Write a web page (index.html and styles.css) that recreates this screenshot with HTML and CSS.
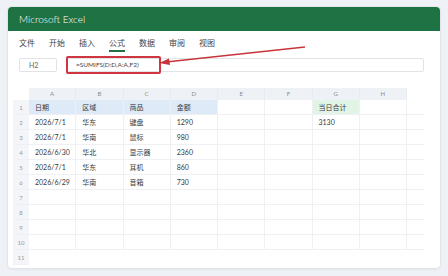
FILE: index.html
```html
<!DOCTYPE html>
<html lang="zh-CN">
<head>
<meta charset="utf-8">
<title>Microsoft Excel</title>
<link rel="stylesheet" href="styles.css">
</head>
<body>
<div class="window">
  <div class="titlebar">Microsoft Excel</div>
  <div class="menu">
    <span class="item">文件</span>
    <span class="item">开始</span>
    <span class="item">插入</span>
    <span class="item active">公式</span>
    <span class="item">数据</span>
    <span class="item">审阅</span>
    <span class="item">视图</span>
  </div>
  <div class="formula-row">
    <div class="namebox">H2</div>
    <div class="fx">
      <span class="fx-text">=SUMIFS(D:D,A:A,F2)</span>
      <div class="highlight"></div>
    </div>
  </div>
  <div class="sheet">
    <div class="corner"></div>
    <div class="ch">A</div><div class="ch">B</div><div class="ch">C</div><div class="ch">D</div>
    <div class="ch">E</div><div class="ch">F</div><div class="ch">G</div><div class="ch">H</div>
    <div class="fill-h"></div>

    <div class="rh">1</div>
    <div class="c blue">日期</div><div class="c blue">区域</div><div class="c blue">商品</div><div class="c blue">金额</div>
    <div class="c"></div><div class="c"></div><div class="c green">当日合计</div><div class="c"></div><div class="f"></div>

    <div class="rh">2</div>
    <div class="c">2026/7/1</div><div class="c">华东</div><div class="c">键盘</div><div class="c">1290</div>
    <div class="c"></div><div class="c"></div><div class="c">3130</div><div class="c"></div><div class="f"></div>

    <div class="rh">3</div>
    <div class="c">2026/7/1</div><div class="c">华南</div><div class="c">鼠标</div><div class="c">980</div>
    <div class="c"></div><div class="c"></div><div class="c"></div><div class="c"></div><div class="f"></div>

    <div class="rh">4</div>
    <div class="c">2026/6/30</div><div class="c">华北</div><div class="c">显示器</div><div class="c">2360</div>
    <div class="c"></div><div class="c"></div><div class="c"></div><div class="c"></div><div class="f"></div>

    <div class="rh">5</div>
    <div class="c">2026/7/1</div><div class="c">华东</div><div class="c">耳机</div><div class="c">860</div>
    <div class="c"></div><div class="c"></div><div class="c"></div><div class="c"></div><div class="f"></div>

    <div class="rh">6</div>
    <div class="c">2026/6/29</div><div class="c">华南</div><div class="c">音箱</div><div class="c">730</div>
    <div class="c"></div><div class="c"></div><div class="c"></div><div class="c"></div><div class="f"></div>

    <div class="rh">7</div>
    <div class="c"></div><div class="c"></div><div class="c"></div><div class="c"></div>
    <div class="c"></div><div class="c"></div><div class="c"></div><div class="c"></div><div class="f"></div>

    <div class="rh">8</div>
    <div class="c"></div><div class="c"></div><div class="c"></div><div class="c"></div>
    <div class="c"></div><div class="c"></div><div class="c"></div><div class="c"></div><div class="f"></div>

    <div class="rh">9</div>
    <div class="c"></div><div class="c"></div><div class="c"></div><div class="c"></div>
    <div class="c"></div><div class="c"></div><div class="c"></div><div class="c"></div><div class="f"></div>

    <div class="rh">10</div>
    <div class="c"></div><div class="c"></div><div class="c"></div><div class="c"></div>
    <div class="c"></div><div class="c"></div><div class="c"></div><div class="c"></div><div class="f"></div>

    <div class="rh">11</div>
    <div class="last"></div>
  </div>
  <svg class="arrow" width="448" height="80" viewBox="0 0 448 80">
    <line x1="305" y1="47" x2="166" y2="62" stroke="#c9343c" stroke-width="1.4"/>
    <polygon points="159,63 169,58.5 170,65" fill="#c9343c"/>
  </svg>
</div>
</body>
</html>
```
FILE: styles.css
```css
* { box-sizing: border-box; }
html, body { margin: 0; padding: 0; }
body {
  background: #eef1f6;
  font-family: "Lato", "Noto Sans CJK SC", sans-serif;
  width: 448px;
  height: 276px;
  overflow: hidden;
}
.window {
  position: relative;
  margin: 7px 0 0 8px;
  width: 432px;
  height: 261px;
  background: #fff;
  border-radius: 4px;
  overflow: hidden;
  box-shadow: 0 0 0 1px #e2e6ec, 0 1px 3px rgba(0,0,0,0.10);
}
.titlebar {
  height: 24px;
  background: #1f7244;
  color: #fff;
  font-size: 10px;
  font-weight: 300;
  line-height: 24px;
  padding-left: 11px;
}
.menu {
  display: flex;
  gap: 14px;
  padding: 6px 0 0 11px;
  height: 21px;
}
.item {
  font-family: "Noto Sans CJK SC", sans-serif;
  font-size: 8px;
  line-height: 12px;
  color: #444;
  height: 15px;
}
.item.active {
  border-bottom: 2px solid #1f7244;
}
.formula-row {
  display: flex;
  margin-top: 6px;
  padding: 0 16px 0 11px;
  gap: 10px;
  height: 14px;
}
.namebox {
  width: 38px;
  border: 1px solid #e0e3e8;
  border-radius: 2px;
  font-size: 7px;
  line-height: 12px;
  color: #666;
  padding-left: 9px;
}
.fx {
  position: relative;
  flex: 1;
  border: 1px solid #e0e3e8;
  border-radius: 2px;
  font-size: 6.5px;
  line-height: 12px;
  color: #444;
  padding-left: 8px;
}
.highlight {
  position: absolute;
  left: -2px;
  top: -3px;
  width: 95px;
  height: 18px;
  border: 2px solid #d0363f;
  border-radius: 2px;
}
.sheet {
  display: grid;
  grid-template-columns: 16px repeat(8, 47.25px) 17px;
  grid-template-rows: 12px repeat(11, 15px);
  margin: 16px 0 0 5px;
}
.corner { background: #fff; }
.ch {
  background: #eef1f5;
  color: #8a8f98;
  font-size: 6px;
  line-height: 12px;
  text-align: center;
  border-right: 1px solid #e8ebef;
}
.fill-h { background: #fff; }
.rh {
  background: #f3f5f8;
  color: #959aa2;
  font-size: 6px;
  line-height: 15px;
  text-align: center;
  border-bottom: 1px solid #eef0f3;
}
.c {
  border-right: 1px solid #eef0f3;
  border-bottom: 1px solid #eef0f3;
  font-size: 7px;
  line-height: 14px;
  color: #3a3a3a;
  padding-left: 6px;
  white-space: nowrap;
  overflow: hidden;
}
.f { border-bottom: 1px solid #eef0f3; }
.c.blue { background: #deeaf8; }
.c.green { background: #e1f4e6; }
.last { grid-column: 2 / 11; }
.arrow {
  position: absolute;
  left: -8px;
  top: -7px;
  pointer-events: none;
}
```
